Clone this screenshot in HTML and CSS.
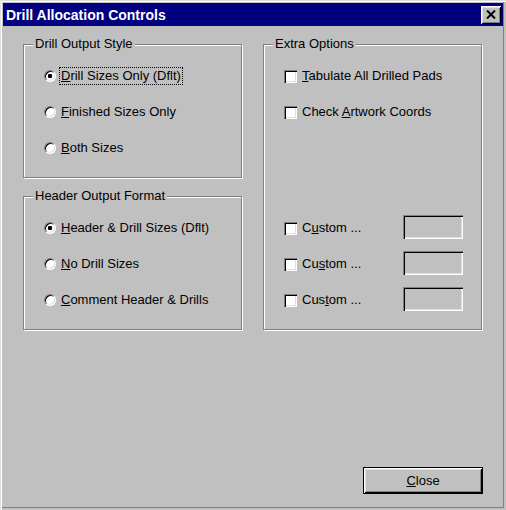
FILE: index.html
```html
<!DOCTYPE html>
<html lang="en">
<head>
    <meta charset="UTF-8">
    <title>Drill Allocation Controls</title>
    <link rel="stylesheet" href="styles.css">
</head>
<body>

    <div class="window">

        <!-- TITLE BAR -->
        <div class="titlebar">
            <span class="title">Drill Allocation Controls</span>
            <button class="btn-x" aria-label="Close">
                <svg width="10" height="9" viewBox="0 0 10 9">
                    <path d="M1 0.5 L9 8.5 M9 0.5 L1 8.5" stroke="#000" stroke-width="2" fill="none"/>
                </svg>
            </button>
        </div>

        <div class="client">
            <div class="groups">

                <div class="col">
                    <!-- DRILL OUTPUT STYLE -->
                    <div class="group">
                        <span class="legend">Drill Output Style</span>
                        <div class="opt"><span class="radio checked"></span><span class="lbl focus"><u>D</u>rill Sizes Only (Dflt)</span></div>
                        <div class="opt"><span class="radio"></span><span class="lbl"><u>F</u>inished Sizes Only</span></div>
                        <div class="opt"><span class="radio"></span><span class="lbl"><u>B</u>oth Sizes</span></div>
                    </div>

                    <!-- HEADER OUTPUT FORMAT -->
                    <div class="group">
                        <span class="legend">Header Output Format</span>
                        <div class="opt"><span class="radio checked"></span><span class="lbl"><u>H</u>eader &amp; Drill Sizes (Dflt)</span></div>
                        <div class="opt"><span class="radio"></span><span class="lbl"><u>N</u>o Drill Sizes</span></div>
                        <div class="opt"><span class="radio"></span><span class="lbl"><u>C</u>omment Header &amp; Drills</span></div>
                    </div>
                </div>

                <!-- EXTRA OPTIONS -->
                <div class="group group-tall">
                    <span class="legend">Extra Options</span>
                    <div class="opt"><span class="check"></span><span class="lbl"><u>T</u>abulate All Drilled Pads</span></div>
                    <div class="opt"><span class="check"></span><span class="lbl">Check <u>A</u>rtwork Coords</span></div>

                    <div class="customs">
                        <div class="opt"><span class="check"></span><span class="lbl">C<u>u</u>stom ...</span><span class="field"></span></div>
                        <div class="opt"><span class="check"></span><span class="lbl">Cu<u>s</u>tom ...</span><span class="field"></span></div>
                        <div class="opt"><span class="check"></span><span class="lbl">Cus<u>t</u>om ...</span><span class="field"></span></div>
                    </div>
                </div>

            </div>

            <div class="footer">
                <button class="btn default"><u>C</u>lose</button>
            </div>
        </div>

    </div>

</body>
</html>
```

FILE: styles.css
```css
* {
    margin: 0;
    padding: 0;
    box-sizing: border-box;
}

body {
    background: #c0c0c0;
    font-family: "Liberation Sans", Arial, sans-serif;
    font-size: 13px;
    color: #000;
}

.window {
    width: 506px;
    height: 510px;
    padding: 3px;
    display: flex;
    flex-direction: column;
    background: #c0c0c0;
    box-shadow: inset 1px 1px #dfdfdf, inset 2px 2px #fff, inset -2px -2px #c0c0c0, inset -3px -3px #808080;
}

/* title bar */
.titlebar {
    height: 23px;
    background: #000080;
    display: flex;
    align-items: center;
    justify-content: space-between;
    padding: 0 2px 0 3px;
}

.title {
    color: #fff;
    font-weight: 700;
    font-size: 14px;
}

.btn-x {
    width: 20px;
    height: 18px;
    background: #c0c0c0;
    border: none;
    display: flex;
    align-items: center;
    justify-content: center;
    box-shadow: inset 1px 1px #fff, inset -1px -1px #000, inset 2px 2px #dfdfdf, inset -2px -2px #808080;
}

/* client area */
.client {
    flex: 1;
    display: flex;
    flex-direction: column;
    padding: 18px 20px 13px 20px;
}

.groups {
    display: grid;
    grid-template-columns: 219px 219px;
    column-gap: 21px;
}

.col {
    display: flex;
    flex-direction: column;
    gap: 18px;
}

.group {
    position: relative;
    height: 134px;
    display: flex;
    flex-direction: column;
    gap: 18px;
    padding: 22px 18px 20px 20px;
    border: 1px solid #808080;
    box-shadow: inset 1px 1px #fff, 1px 1px #fff;
}

.group-tall {
    height: auto;
}

.legend {
    position: absolute;
    top: -9px;
    left: 9px;
    padding: 0 2px;
    line-height: 15px;
    background: #c0c0c0;
}

.opt {
    display: flex;
    align-items: center;
    height: 18px;
}

.lbl {
    line-height: 18px;
    padding: 0 2px;
    white-space: nowrap;
}

.lbl.focus {
    outline: 1px dotted #000;
    outline-offset: -1px;
}

.radio {
    position: relative;
    width: 12px;
    height: 12px;
    margin-right: 3px;
    border-radius: 50%;
    background: #fff;
    border: 1px solid;
    border-color: #808080 #fff #fff #808080;
    box-shadow: inset 1px 1px #000, inset -1px -1px #dfdfdf;
}

.radio.checked::after {
    content: "";
    position: absolute;
    left: 3px;
    top: 3px;
    width: 4px;
    height: 4px;
    border-radius: 1px;
    background: #000;
}

.check {
    width: 13px;
    height: 13px;
    margin-right: 3px;
    background: #fff;
    box-shadow: inset 1px 1px #808080, inset 2px 2px #000, inset -1px -1px #fff, inset -2px -2px #dfdfdf;
}

.customs {
    margin-top: auto;
    display: flex;
    flex-direction: column;
    gap: 18px;
}

.field {
    margin-left: auto;
    margin-bottom: 2px;
    width: 60px;
    height: 24px;
    flex-shrink: 0;
    background: #c0c0c0;
    box-shadow: inset 1px 1px #808080, inset 2px 2px #000, inset -1px -1px #fff, inset -2px -2px #dfdfdf;
}

/* footer */
.footer {
    margin-top: auto;
    display: flex;
    justify-content: flex-end;
}

.btn {
    width: 120px;
    height: 27px;
    font-family: inherit;
    font-size: 13px;
    color: #000;
    background: #c0c0c0;
    border: none;
    box-shadow: inset 1px 1px #fff, inset -1px -1px #000, inset 2px 2px #dfdfdf, inset -2px -2px #808080;
}

.btn.default {
    border: 1px solid #000;
}
```
